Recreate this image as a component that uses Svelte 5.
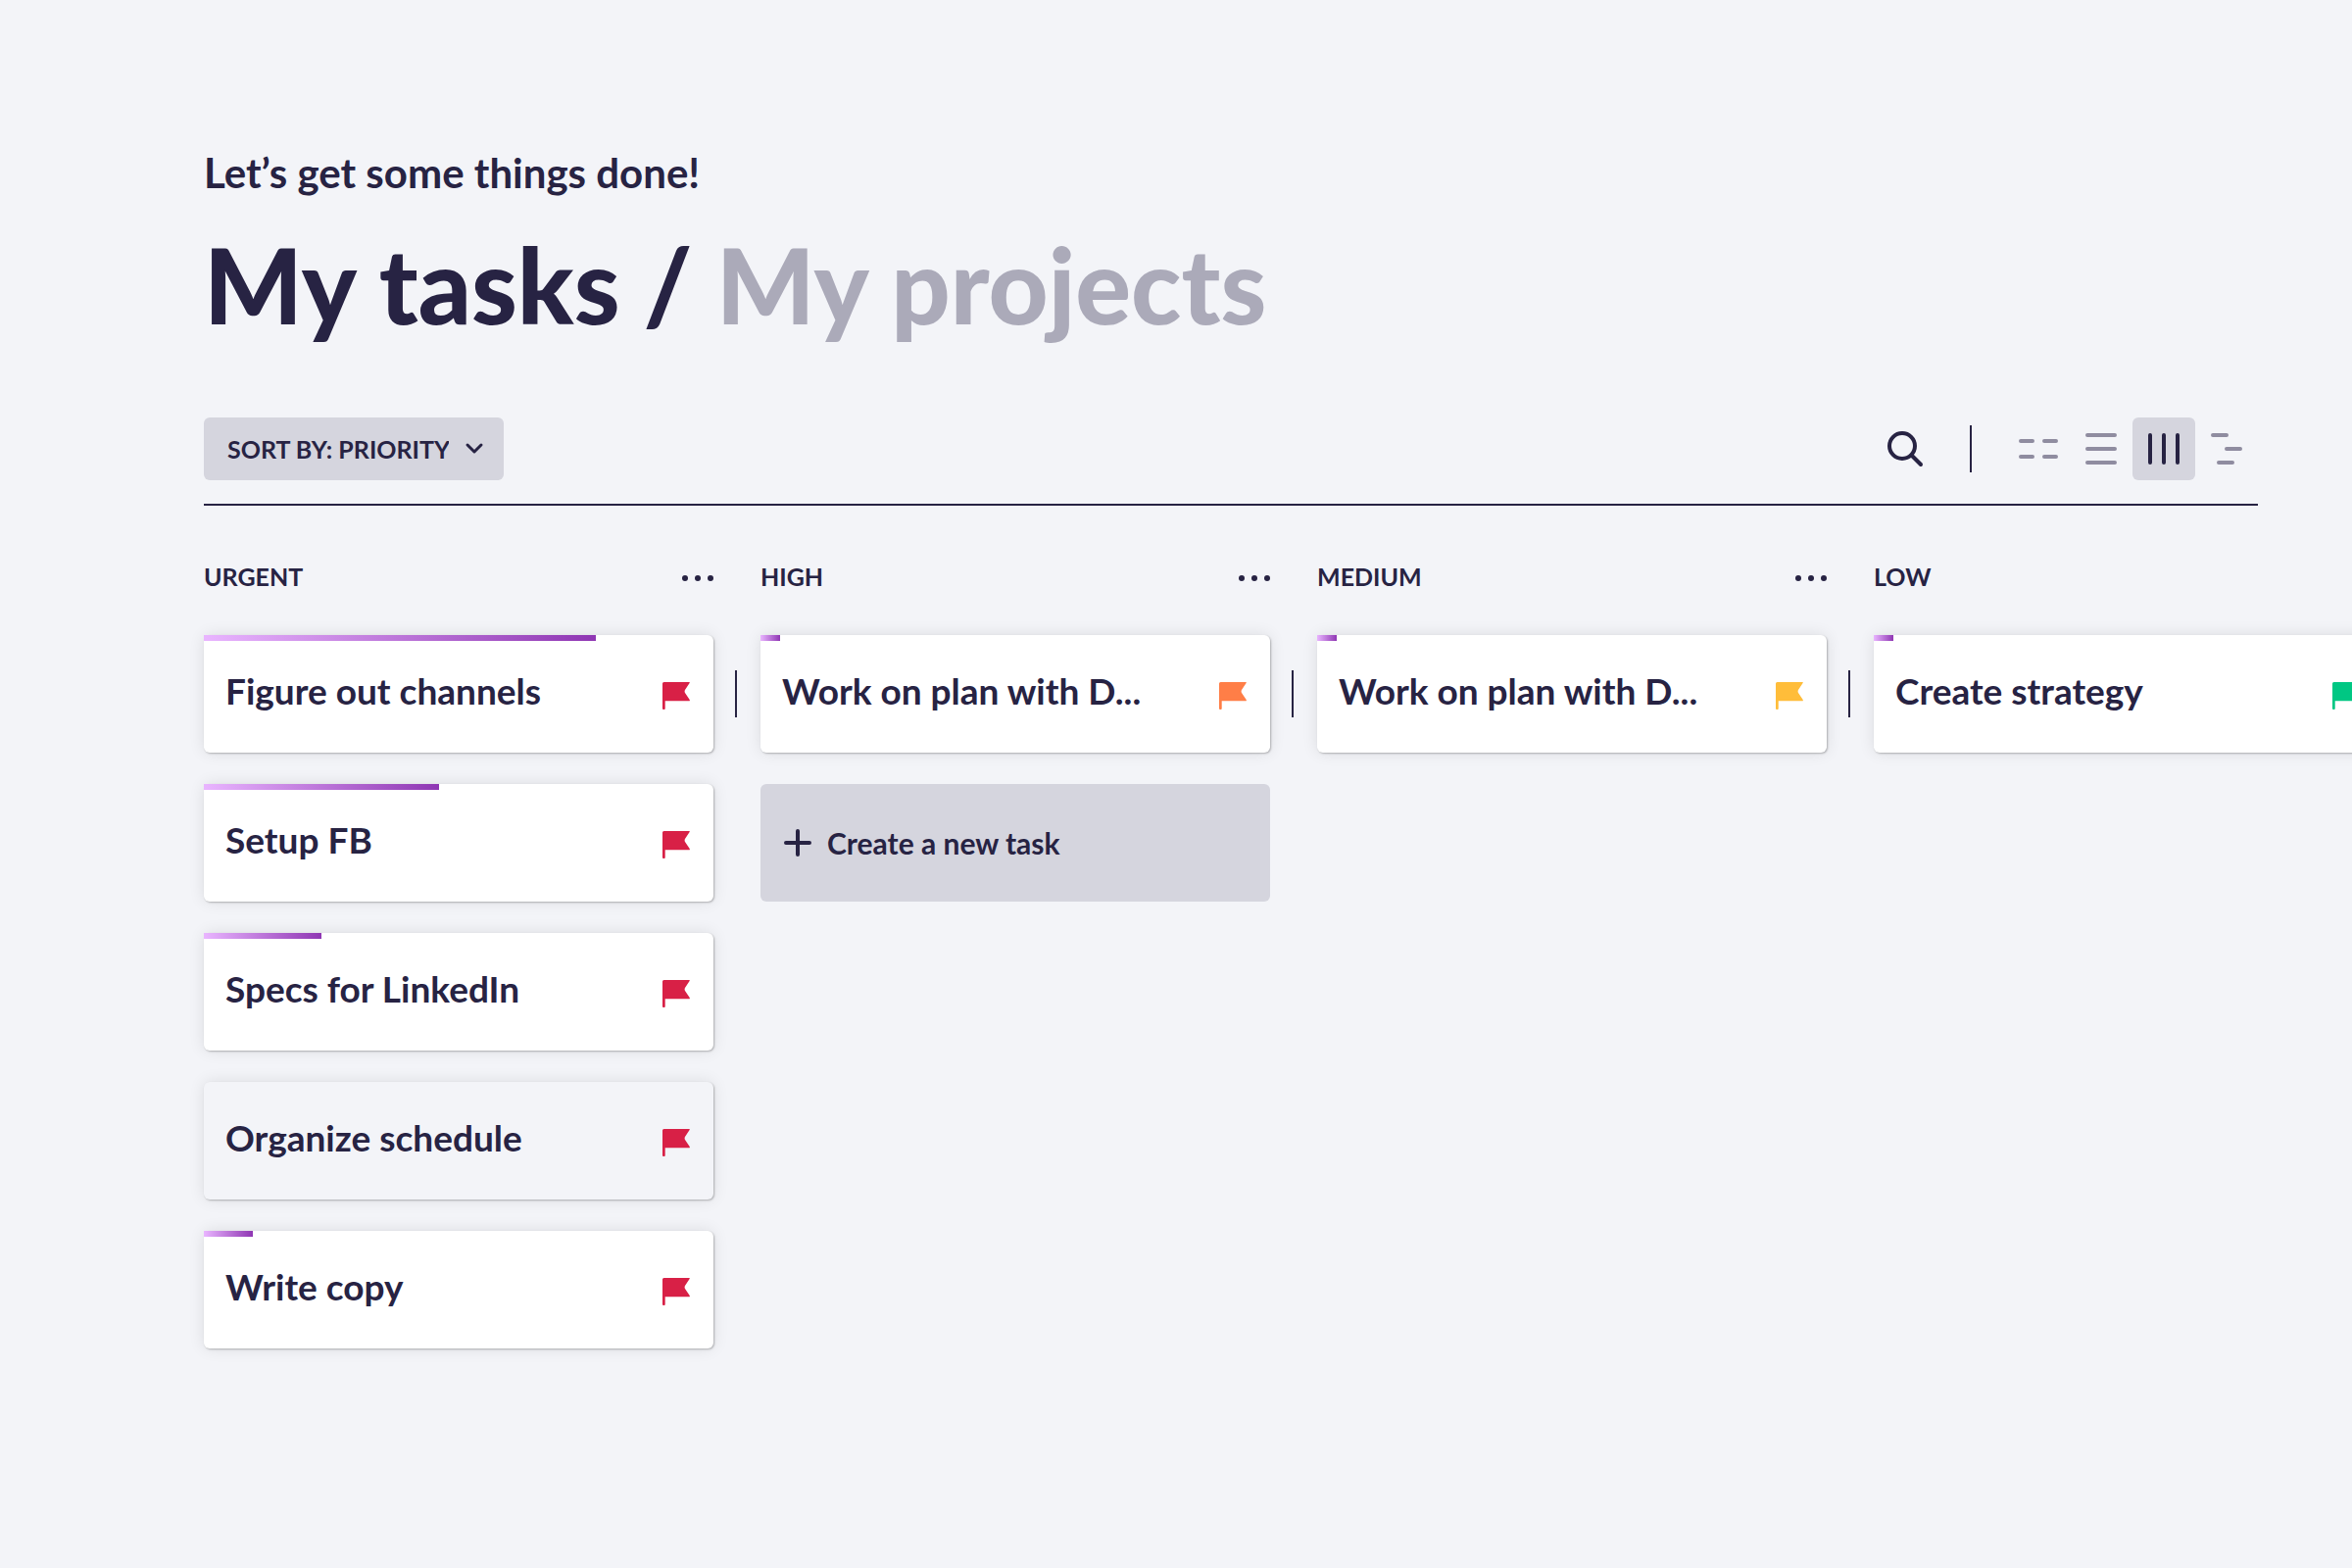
<script>
  let sort = $state('priority');
  let view = $state('board');

  const sorts = [
    { value: 'priority', label: 'SORT BY: PRIORITY' },
    { value: 'name', label: 'SORT BY: NAME' },
    { value: 'date', label: 'SORT BY: DATE' }
  ];

  const views = [
    { id: 'grid', label: 'Grid view', path: 'M14 24h12M38 24h12M14 40h12M38 40h12' },
    { id: 'list', label: 'List view', path: 'M18 18h28M18 32h28M18 46h28' },
    { id: 'board', label: 'Board view', path: 'M18 18v28M32 18v28M46 18v28' },
    { id: 'timeline', label: 'Timeline view', path: 'M18 18h14M32 32h14M24 46h14' }
  ];

  const columns = [
    {
      name: 'URGENT',
      tone: 'red',
      tasks: [
        { title: 'Figure out channels', progress: 77 },
        { title: 'Setup FB', progress: 46.2 },
        { title: 'Specs for LinkedIn', progress: 23.1 },
        { title: 'Organize schedule', progress: 0, idle: true },
        { title: 'Write copy', progress: 9.6 }
      ]
    },
    {
      name: 'HIGH',
      tone: 'orange',
      tasks: [{ title: 'Work on plan with D...', progress: 3.8 }],
      creatable: true
    },
    { name: 'MEDIUM', tone: 'yellow', tasks: [{ title: 'Work on plan with D...', progress: 3.8 }] },
    { name: 'LOW', tone: 'green', tasks: [{ title: 'Create strategy', progress: 3.8 }] }
  ];
</script>

<main>
  <header>
    <p class="greeting">Let’s get some things done!</p>
    <h1>
      <a href="#tasks" aria-current="page">My tasks</a>
      <span>/</span>
      <a href="#projects" class="muted">My projects</a>
    </h1>
    <div class="toolbar">
      <div class="sort">
        <select aria-label="Sort tasks" bind:value={sort}>
          {#each sorts as s}
            <option value={s.value}>{s.label}</option>
          {/each}
        </select>
        <svg width="20" height="16" viewBox="0 0 20 16" aria-hidden="true">
          <path d="M3 4l7 7 7-7" />
        </svg>
      </div>
      <div class="tools">
        <button class="icon dark" aria-label="Search">
          <svg viewBox="0 0 64 64"><circle cx="29" cy="29" r="13" /><path d="M39 39l9 9" /></svg>
        </button>
        <span class="rule"></span>
        <div class="views">
          {#each views as v}
            <button
              class="icon"
              class:active={view === v.id}
              aria-label={v.label}
              aria-pressed={view === v.id}
              onclick={() => (view = v.id)}
            >
              <svg viewBox="0 0 64 64"><path d={v.path} /></svg>
            </button>
          {/each}
        </div>
      </div>
    </div>
  </header>

  <div class="board">
    {#each columns as col, i}
      {#if i > 0}<span class="divider"></span>{/if}
      <section class={col.tone}>
        <div class="head">
          <h2>{col.name}</h2>
          <button class="more" aria-label="{col.name} options">
            <svg width="32" height="8" viewBox="0 0 32 8">
              <circle cx="3" cy="4" r="3" /><circle cx="16" cy="4" r="3" /><circle cx="29" cy="4" r="3" />
            </svg>
          </button>
        </div>
        {#each col.tasks as task}
          <article class="card" class:idle={task.idle}>
            {#if task.progress}
              <div class="progress" style="width: {task.progress}%"></div>
            {/if}
            <h3>{task.title}</h3>
            <svg class="flag" width="28" height="28" viewBox="0 0 28 28" aria-hidden="true">
              <path d="M0 1.5Q0 0 1.500 0H27.200Q28.300 0 27.600 1L23 8Q22.200 9.500 23 11L27.700 18Q28.300 19.300 27 19.300H2.700V27Q2.700 28 1.700 28H1Q0 28 0 27Z" />
            </svg>
          </article>
        {/each}
        {#if col.creatable}
          <button class="create">
            <svg width="28" height="28" viewBox="0 0 28 28" aria-hidden="true"><path d="M14 2v24M2 14h24" /></svg>
            Create a new task
          </button>
        {/if}
      </section>
    {/each}
  </div>
</main>

<style>
  :global(body) {
    background: #f3f4f8;
  }
  main {
    padding-top: 150px;
    color: #272343;
    font-family: Lato, 'Liberation Sans', sans-serif;
    font-weight: 700;
  }
  header {
    padding: 0 96px 0 208px;
  }
  h1,
  h2,
  h3,
  p {
    margin: 0;
  }
  .greeting {
    font-size: 42px;
    line-height: 52px;
  }
  h1 {
    display: flex;
    gap: 24px;
    margin-top: 26px;
    font-size: 106px;
    font-weight: 900;
    line-height: 124px;
    white-space: nowrap;
  }
  a {
    color: inherit;
    text-decoration: none;
  }
  .muted {
    color: #abaab9;
  }
  .toolbar {
    display: flex;
    justify-content: space-between;
    align-items: center;
    margin-top: 74px;
    padding-bottom: 24px;
    border-bottom: 2px solid #272343;
  }
  button,
  select {
    border: 0;
    margin: 0;
    padding: 0;
    background: none;
    color: inherit;
    font: inherit;
    cursor: pointer;
  }
  svg {
    display: block;
    fill: none;
    stroke: currentColor;
    stroke-width: 4px;
    stroke-linecap: round;
    stroke-linejoin: round;
  }
  .sort {
    display: grid;
    align-items: center;
  }
  .sort > * {
    grid-area: 1 / 1;
  }
  .sort select {
    appearance: none;
    width: 306px;
    height: 64px;
    padding: 0 56px 0 24px;
    border-radius: 6px;
    background: #d5d5de;
    font-size: 25px;
  }
  .sort svg {
    justify-self: end;
    margin-right: 20px;
    stroke-width: 3px;
    pointer-events: none;
  }
  .tools,
  .views {
    display: flex;
    align-items: center;
  }
  .rule {
    width: 2px;
    height: 48px;
    margin: 0 36px 0 34px;
    background: #272343;
  }
  .icon {
    width: 64px;
    height: 64px;
    border-radius: 6px;
    color: #8f8ca0;
  }
  .dark,
  .active {
    color: #272343;
  }
  .active {
    background: #d5d5de;
  }
  .board {
    display: flex;
    padding: 56px 96px 48px 208px;
    overflow-x: auto;
    scrollbar-width: none;
  }
  .divider {
    flex: none;
    width: 2px;
    height: 48px;
    margin: 112px 24px 0 22px;
    background: #272343;
  }
  section {
    flex: none;
    display: flex;
    flex-direction: column;
    gap: 32px;
    width: 520px;
  }
  .head {
    display: flex;
    justify-content: space-between;
    align-items: center;
    margin-bottom: 12px;
  }
  h2 {
    font-size: 25px;
    line-height: 32px;
  }
  .more {
    padding-top: 4px;
  }
  .more svg {
    fill: currentColor;
    stroke: none;
  }
  .card {
    position: relative;
    display: flex;
    justify-content: space-between;
    align-items: center;
    box-sizing: border-box;
    height: 120px;
    padding: 0 24px 0 22px;
    border-radius: 6px;
    background: #fff;
    box-shadow:
      1px 1px 2px rgba(0, 0, 0, 0.25),
      0 0 16px rgba(0, 0, 0, 0.1);
  }
  .idle {
    background: #f3f4f8;
  }
  .progress {
    position: absolute;
    top: 0;
    left: 0;
    height: 6px;
    background: linear-gradient(90deg, #e9b5ff, #8f36b3);
  }
  h3 {
    padding-bottom: 6px;
    font-size: 37px;
    line-height: 44px;
  }
  .flag {
    margin-top: 4px;
    stroke: none;
    fill: currentColor;
  }
  .red .flag {
    color: #d82046;
  }
  .orange .flag {
    color: #ff7e47;
  }
  .yellow .flag {
    color: #ffbd3a;
  }
  .green .flag {
    color: #00c783;
  }
  .create {
    display: flex;
    align-items: center;
    gap: 16px;
    height: 120px;
    padding: 0 24px;
    border-radius: 6px;
    background: #d5d5de;
    font-size: 30px;
  }
</style>
